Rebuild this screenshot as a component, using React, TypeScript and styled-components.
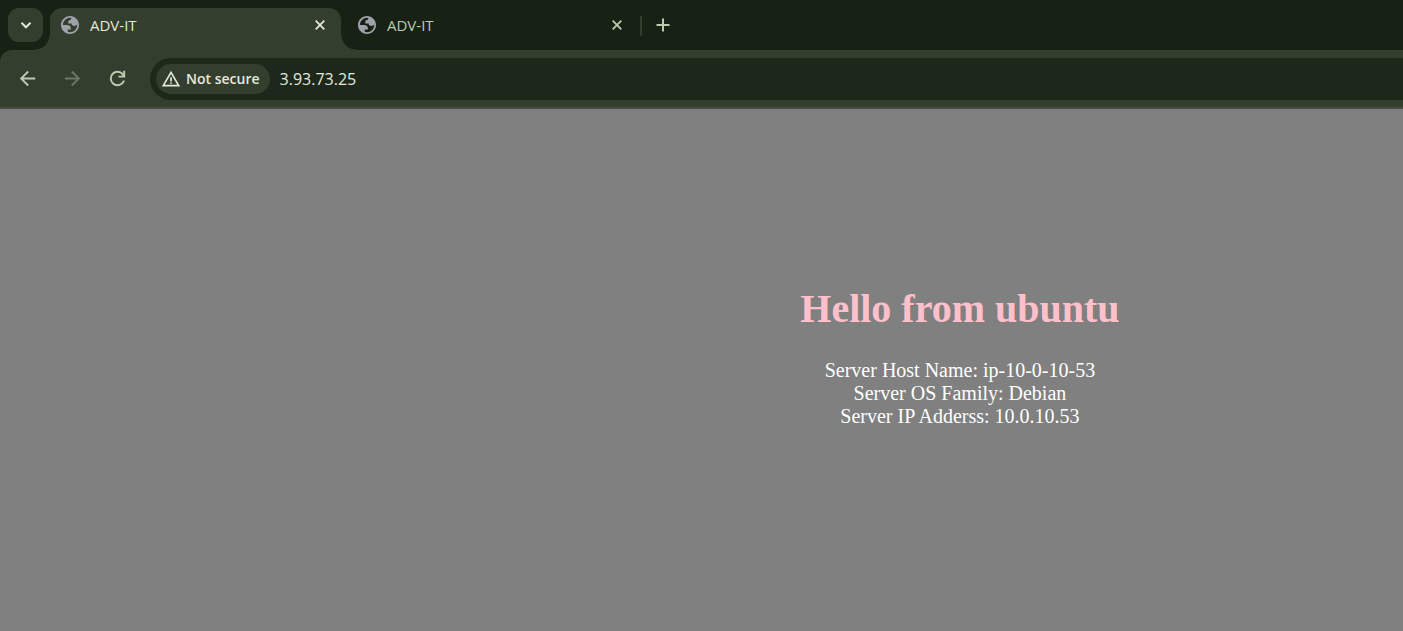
import React from "react";
import styled, { createGlobalStyle } from "styled-components";

const color = {
  strip: "#182214",
  toolbar: "#343e2e",
  field: "#1e281a",
  edge: "#464d40",
  accent: "#bccbb0",
  bright: "#e3e8dc",
  muted: "#6d7865",
  favicon: "#9fa3a9",
};

const GlobalStyle = createGlobalStyle`
  *, *::before, *::after { box-sizing: border-box; }
  body { margin: 0; background: #808080; }
  button, input { font: inherit; color: inherit; border: 0; padding: 0; background: none; }
`;

const Browser = styled.div`
  display: flex;
  flex-direction: column;
  min-height: 100vh;
  overflow: hidden;
  font-family: "Open Sans", "Noto Sans", sans-serif;
`;

const TabStrip = styled.header`
  display: flex;
  align-items: flex-start;
  height: 50px;
  padding: 8px 8px 0;
  background: ${color.strip};
`;

const SearchTabs = styled.button`
  display: grid;
  place-items: center;
  flex: none;
  width: 35px;
  height: 34px;
  margin-right: 7px;
  border-radius: 11px;
  background: ${color.toolbar};
  color: ${color.bright};
`;

const Tabs = styled.nav`
  display: flex;
  gap: 6px;
  min-width: 0;
`;

const Tab = styled.div<{ $active?: boolean }>`
  position: relative;
  display: flex;
  align-items: center;
  flex: 0 1 291px;
  width: 291px;
  height: 42px;
  padding: 0 11px 8px;
  border-radius: 12px 12px 0 0;
  color: ${(p) => (p.$active ? color.bright : color.accent)};
  background: ${(p) => (p.$active ? color.toolbar : "transparent")};

  &::before,
  &::after {
    content: "";
    display: ${(p) => (p.$active ? "block" : "none")};
    position: absolute;
    bottom: 0;
    width: 15px;
    height: 15px;
  }
  &::before {
    right: 100%;
    background: radial-gradient(circle at 0 0, transparent 14px, ${color.toolbar} 15px);
  }
  &::after {
    left: 100%;
    background: radial-gradient(circle at 100% 0, transparent 14px, ${color.toolbar} 15px);
  }
`;

const TabTitle = styled.button`
  display: flex;
  align-items: center;
  gap: 11px;
  flex: 1;
  min-width: 0;
  font-size: 15px;
  line-height: 20px;
  text-align: left;
`;

const SmallButton = styled.button`
  display: grid;
  place-items: center;
  flex: none;
  width: 20px;
  height: 20px;
`;

const Divider = styled.span`
  flex: none;
  width: 2px;
  height: 20px;
  margin: 8px 5px 0 2px;
  border-radius: 1px;
  background: ${color.toolbar};
`;

const NewTab = styled.button`
  display: grid;
  place-items: center;
  flex: none;
  width: 32px;
  height: 34px;
  color: ${color.accent};
`;

const ToolbarBack = styled.div`
  background: ${color.strip};
`;

const Toolbar = styled.div`
  display: flex;
  align-items: flex-start;
  gap: 10px;
  padding: 8px 0 7px 10px;
  border-radius: 12px 0 0 0;
  border-bottom: 2px solid ${color.edge};
  background: ${color.toolbar};
`;

const NavButton = styled.button`
  display: grid;
  place-items: center;
  flex: none;
  width: 35px;
  height: 41px;
  color: ${color.accent};

  &:disabled {
    color: ${color.muted};
  }
`;

const AddressBar = styled.form`
  display: flex;
  align-items: center;
  gap: 10px;
  flex: 1;
  min-width: 0;
  height: 42px;
  margin-left: 5px;
  padding-left: 6px;
  border-radius: 21px 0 0 21px;
  background: ${color.field};
  color: ${color.bright};
`;

const SecurityChip = styled.button`
  display: flex;
  align-items: center;
  gap: 5px;
  flex: none;
  height: 30px;
  padding: 0 10px 0 5px;
  border-radius: 15px;
  background: ${color.toolbar};
  font-size: 14px;
  font-weight: 600;
  line-height: 20px;
`;

const AddressInput = styled.input`
  flex: 1;
  min-width: 0;
  height: 30px;
  font-size: 16px;
  outline: none;
`;

const Page = styled.main`
  display: grid;
  grid-template-columns: 7fr 12fr;
  flex: 1;
  padding-top: 177px;
  background: #808080;
  color: #ffffff;
  font-family: "Liberation Serif", "Times New Roman", serif;
  text-align: center;
`;

const Message = styled.section`
  grid-column: 2;
`;

const Heading = styled.h1`
  margin: 0 0 27px;
  color: #ffc0cb;
  font-size: 40px;
  line-height: 46px;
`;

const Details = styled.p`
  margin: 0;
  font-size: 20px;
  line-height: 23px;
`;

const Glyph = ({ d, size }: { d: string; size: number }) => (
  <svg width={size} height={size} viewBox="0 -960 960 960" fill="currentColor" aria-hidden="true">
    <path d={d} />
  </svg>
);

const Stroke = ({ d, size, width = 2 }: { d: string; size: number; width?: number }) => (
  <svg
    width={size}
    height={size}
    viewBox={`0 0 ${size} ${size}`}
    fill="none"
    stroke="currentColor"
    strokeWidth={width}
    aria-hidden="true"
  >
    <path d={d} />
  </svg>
);

const Globe = () => (
  <svg width="18" height="18" viewBox="2 2 20 20" fill={color.favicon} aria-hidden="true">
    <path
      fillRule="evenodd"
      d="M12 2C6.48 2 2 6.48 2 12s4.48 10 10 10 10-4.48 10-10S17.52 2 12 2zM4 12h4.4c3.407.022 4.922 1.73 4.543 5.127H9.488v2.47a8.004 8.004 0 0 0 10.498-8.083C19.327 12.504 18.332 13 17 13c-2.137 0-3.206-.916-3.206-2.75h-3.748c-.274-2.728.683-4.092 2.87-4.092 0-.975.327-1.597.811-1.97A8.004 8.004 0 0 0 4 12z"
    />
  </svg>
);

const arrowBack = "m313-440 224 224-57 56-320-320 320-320 57 56-224 224h487v80H313Z";
const arrowForward = "M647-440H160v-80h487L423-744l57-56 320 320-320 320-57-56 224-224Z";
const refresh =
  "M480-160q-134 0-227-93t-93-227q0-134 93-227t227-93q69 0 132 28.5T720-690v-110h80v280H520v-80h168q-32-56-87.5-88T480-720q-100 0-170 70t-70 170q0 100 70 170t170 70q77 0 139-44t87-116h84q-28 106-114 173t-196 67Z";
const warning =
  "m40-120 440-760 440 760H40Zm138-80h604L480-720 178-200Zm302-40q17 0 28.5-11.5T520-280q0-17-11.5-28.5T480-320q-17 0-28.5 11.5T440-280q0 17 11.5 28.5T480-240Zm-40-120h80v-200h-80v200Z";

const tabs = [
  { id: 1, title: "ADV-IT", active: true },
  { id: 2, title: "ADV-IT", active: false },
];

export default function App() {
  return (
    <Browser>
      <GlobalStyle />
      <TabStrip>
        <SearchTabs type="button" aria-label="Search tabs">
          <Stroke size={12} d="M1.5 3.8 6 8.3l4.5-4.5" />
        </SearchTabs>
        <Tabs aria-label="Tabs">
          {tabs.map((tab) => (
            <Tab key={tab.id} $active={tab.active}>
              <TabTitle type="button">
                <Globe />
                {tab.title}
              </TabTitle>
              <SmallButton type="button" aria-label="Close tab">
                <Stroke size={12} width={1.8} d="m1.7 1.7 8.6 8.6M10.3 1.7l-8.6 8.6" />
              </SmallButton>
            </Tab>
          ))}
        </Tabs>
        <Divider />
        <NewTab type="button" aria-label="New tab">
          <Stroke size={14} d="M7 .5v13M.5 7h13" />
        </NewTab>
      </TabStrip>
      <ToolbarBack>
        <Toolbar>
          <NavButton type="button" aria-label="Back">
            <Glyph size={23} d={arrowBack} />
          </NavButton>
          <NavButton type="button" aria-label="Forward" disabled>
            <Glyph size={23} d={arrowForward} />
          </NavButton>
          <NavButton type="button" aria-label="Reload">
            <Glyph size={23} d={refresh} />
          </NavButton>
          <AddressBar onSubmit={(e) => e.preventDefault()}>
            <SecurityChip type="button">
              <Glyph size={20} d={warning} />
              Not secure
            </SecurityChip>
            <AddressInput type="text" aria-label="Address" defaultValue="3.93.73.25" />
          </AddressBar>
        </Toolbar>
      </ToolbarBack>
      <Page>
        <Message>
          <Heading>Hello from ubuntu</Heading>
          <Details>
            Server Host Name: ip-10-0-10-53
            <br />
            Server OS Family: Debian
            <br />
            Server IP Adderss: 10.0.10.53
          </Details>
        </Message>
      </Page>
    </Browser>
  );
}
